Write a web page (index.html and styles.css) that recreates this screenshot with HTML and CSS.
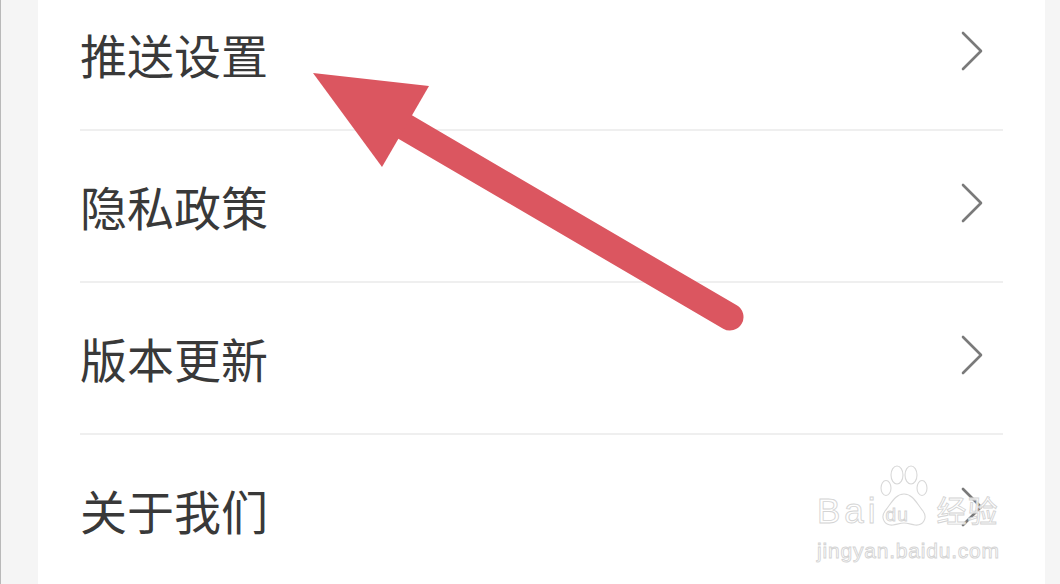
FILE: index.html
```html
<!DOCTYPE html>
<html lang="zh-CN">
<head>
  <meta charset="UTF-8">
  <title>设置</title>
  <link rel="stylesheet" href="styles.css">
</head>
<body>

  <div class="settings">
    <div class="row"><span class="label">推送设置</span><svg class="chev" viewBox="0 0 24 40"><polyline points="3,2 21,20 3,38"/></svg></div>
    <div class="row"><span class="label">隐私政策</span><svg class="chev" viewBox="0 0 24 40"><polyline points="3,2 21,20 3,38"/></svg></div>
    <div class="row"><span class="label">版本更新</span><svg class="chev" viewBox="0 0 24 40"><polyline points="3,2 21,20 3,38"/></svg></div>
    <div class="row"><span class="label">关于我们</span><svg class="chev" viewBox="0 0 24 40"><polyline points="3,2 21,20 3,38"/></svg></div>
  </div>

  <!-- annotation arrow drawn over the list -->
  <svg class="arrow" width="1060" height="584" viewBox="0 0 1060 584">
    <line x1="730" y1="317" x2="400" y2="124" stroke="#db5660" stroke-width="27" stroke-linecap="round"/>
    <polygon points="313,73 429,86 382,167" fill="#db5660"/>
  </svg>

  <div class="watermark">
    <div class="wm-top">
      <span class="wm-bai">Bai</span>
      <span class="wm-paw">
        <svg width="48" height="63" viewBox="0 0 48 63">
          <g fill="rgba(255,255,255,0.8)" stroke="#d8d8d8" stroke-width="1.1">
            <ellipse cx="17" cy="11" rx="6" ry="9"/>
            <ellipse cx="31" cy="11" rx="6" ry="9"/>
            <ellipse cx="6" cy="24" rx="5" ry="7.5"/>
            <ellipse cx="42" cy="24" rx="5" ry="7.5"/>
            <path d="M24 30 C15 30 11 40 5 47 C0 54 5 62 13 61 C18 60 21 59 24 59 C27 59 30 60 35 61 C43 62 48 54 43 47 C37 40 33 30 24 30 Z"/>
          </g>
        </svg>
        <span class="wm-du">du</span>
      </span>
      <span class="wm-jy">经验</span>
    </div>
    <div class="wm-url">jingyan.baidu.com</div>
  </div>

</body>
</html>
```

FILE: styles.css
```css
body {
  margin: 0;
  width: 1060px;
  height: 584px;
  overflow: hidden;
  background: #f5f5f5;
  border-left: 1px solid #b9b9b9;
  box-sizing: border-box;
  position: relative;
  font-family: "Noto Sans CJK SC", "Noto Sans", sans-serif;
}

.settings {
  margin-left: 37px;
  margin-top: -21px;
  width: 1007px;
  height: 605px;
  background: #fff;
  padding: 0 42px;
  box-sizing: border-box;
}

.row {
  display: flex;
  align-items: center;
  justify-content: space-between;
  height: 150px;
  border-bottom: 2px solid #efefef;
  padding-right: 19px;
}

.label {
  font-size: 47px;
  color: #393939;
  margin-top: -2px;
}

.chev {
  width: 24px;
  height: 40px;
  margin-top: -6px;
}

.chev polyline {
  fill: none;
  stroke: #7a7a7a;
  stroke-width: 2.6;
  stroke-linecap: round;
  stroke-linejoin: round;
}

.arrow {
  position: absolute;
  left: -1px;
  top: 0;
}

.watermark {
  position: absolute;
  left: 816px;
  top: 464px;
  font-family: "Liberation Sans", sans-serif;
  color: rgba(255, 255, 255, 0.85);
  -webkit-text-stroke: 0.9px #d4d4d4;
}

.wm-top {
  display: flex;
  align-items: flex-end;
  height: 63px;
}

.wm-bai {
  font-size: 35px;
  line-height: 30px;
  letter-spacing: 4px;
  margin-bottom: 1px;
}

.wm-paw {
  position: relative;
  width: 48px;
  height: 63px;
}

.wm-du {
  position: absolute;
  left: 6px;
  top: 41px;
  font-size: 19px;
  line-height: 19px;
  letter-spacing: 1px;
}

.wm-jy {
  font-family: "Noto Sans CJK SC", sans-serif;
  font-size: 30px;
  line-height: 36px;
  margin-left: 9px;
  letter-spacing: 1px;
}

.wm-url {
  font-size: 21px;
  line-height: 24px;
  margin-top: 12px;
  letter-spacing: 0.8px;
}
```
